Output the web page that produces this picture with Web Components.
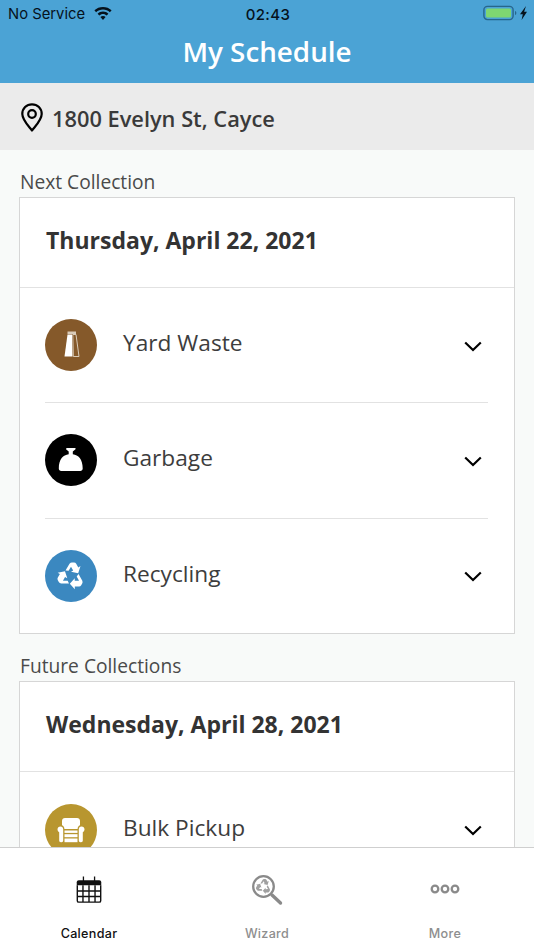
<!DOCTYPE html>
<html>
<head>
<meta charset="utf-8">
<title>My Schedule</title>
<style>
  html, body { margin:0; padding:0; height:100%; }
  body { font-family:"Open Sans","Liberation Sans",sans-serif; background:#f8faf9; }
</style>
</head>
<body>
<schedule-app>
  <status-bar slot="top"></status-bar>
  <nav-title slot="top">My Schedule</nav-title>
  <address-bar slot="top">1800 Evelyn St, Cayce</address-bar>

  <collection-group title="Next Collection" date="Thursday, April 22, 2021">
    <collection-item color="#85592a" name="Yard Waste" icon="yard"></collection-item>
    <collection-item color="#000000" name="Garbage" icon="garbage"></collection-item>
    <collection-item color="#3b88c0" name="Recycling" icon="recycle"></collection-item>
  </collection-group>
  <collection-group title="Future Collections" date="Wednesday, April 28, 2021">
    <collection-item color="#b8962f" name="Bulk Pickup" icon="chair"></collection-item>
  </collection-group>

  <tab-bar slot="bottom"></tab-bar>
</schedule-app>

<script>
const ARROW = "M20.500 20.500L24.500 13.800Q25.500 12.500 27 12.500H29Q30.500 12.500 31.200 13.800L33.300 17.400L35.500 16.100L33.200 23.200L26 21.700L28.200 20.400L26 16.700L23.600 20.800z";
const recycle = (fill) => `<g fill="${fill}"><path d="${ARROW}"/><path d="${ARROW}" transform="rotate(120 26 26)"/><path d="${ARROW}" transform="rotate(240 26 26)"/></g>`;

const ICONS = {
  yard: `<path d="M22.500 12.500H31V15H22.500z" fill="#d9cbb8"/><path d="M22.500 15.500H27L27.500 37.500H19.500z" fill="#fff"/><path d="M27.800 15.500H31L34 37.500H28.300z" fill="#85592a" stroke="#d9cbb8" stroke-width="1"/>`,
  garbage: `<path d="M21.500 14h9v1.200l-2.700 2.300v2.800c5.500.5 9.900 5 9.900 14.200 0 1.600-1 2.500-2.500 2.500H16.300c-1.500 0-2.500-.9-2.500-2.500 0-9.200 4.400-13.700 9.900-14.200v-2.800l-2.700-2.300z" fill="#fff"/>`,
  recycle: recycle("#fff"),
  chair: `<path d="M17 17c0-1.800 1.200-3 3-3h12c1.800 0 3 1.200 3 3v4.200c-1.500.6-2.400 2-2.400 3.800H19.400c0-1.800-.9-3.200-2.400-3.800z" fill="#fff"/>
    <path d="M15.500 22.500c-1.800 0-3 1.300-3 3 0 1.200.7 2.200 1.700 2.700v8.300c0 1 .7 1.700 1.700 1.700h.6c1 0 1.700-.7 1.700-1.700V25.500c0-1.700-1-3-2.700-3zM36.500 22.500c1.800 0 3 1.300 3 3 0 1.200-.7 2.200-1.700 2.700v8.300c0 1-.7 1.700-1.700 1.700h-.6c-1 0-1.700-.7-1.700-1.700V25.500c0-1.700 1-3 2.700-3z" fill="#fff"/>
    <rect x="19.500" y="26.500" width="13" height="2.400" fill="#fff"/><rect x="19.500" y="30.200" width="13" height="3" fill="#fff"/><rect x="19.500" y="34.500" width="13" height="3.700" fill="#fff"/>`
};

class ScheduleApp extends HTMLElement {
  constructor() {
    super();
    this.attachShadow({ mode: "open" }).innerHTML = `
      <style>
        :host{ display:flex; flex-direction:column; height:950px; width:534px; overflow:hidden; }
        .main{ flex:1; min-height:0; overflow:hidden; }
      </style>
      <slot name="top"></slot>
      <div class="main"><slot></slot></div>
      <slot name="bottom"></slot>`;
  }
}
customElements.define("schedule-app", ScheduleApp);

class StatusBar extends HTMLElement {
  constructor() {
    super();
    this.attachShadow({ mode: "open" }).innerHTML = `
      <style>
        :host{ display:block; background:#4ba3d5; height:28px; }
        .bar{ display:grid; grid-template-columns:1fr auto 1fr; align-items:center; height:28px; padding:0 6px 0 8px; font:400 14.800px Inter,"Liberation Sans",sans-serif; color:#06121c; }
        .left{ display:flex; align-items:center; gap:9px; }
        .time{ font-weight:500; font-size:15px; letter-spacing:.4px; }
        .right{ display:flex; justify-content:flex-end; align-items:center; }
        svg{ display:block; }
        .batt{ margin-top:-2px; }
        .wifi{ margin-top:-2px; }
      </style>
      <div class="bar">
        <div class="left"><span>No Service</span>
          <svg class="wifi" width="18" height="13" viewBox="0 0 18 13"><path d="M9 0C5.700 0 2.700 1.200.4 3.300l1.700 1.900C4 3.500 6.400 2.500 9 2.500s5 1 6.900 2.700l1.700-1.900C15.300 1.200 12.300 0 9 0zM9 4.600c-2.100 0-4 .8-5.400 2.100l1.700 1.900C6.300 7.700 7.600 7.100 9 7.100s2.700.6 3.700 1.500l1.700-1.900C13 5.400 11.100 4.600 9 4.600zM9 9.100c-1 0-1.900.4-2.600 1L9 13l2.600-2.900c-.7-.6-1.600-1-2.600-1z" fill="#06121c"/></svg>
        </div>
        <div class="time">02:43</div>
        <div class="right">
          <svg class="batt" width="45" height="16" viewBox="0 0 45 16">
            <rect x=".9" y="1.400" width="29.200" height="13.200" rx="3.500" fill="none" stroke="#27668c" stroke-width="1.400"/>
            <rect x="3" y="3.500" width="25" height="9" rx="1.500" fill="#7ed672"/>
            <path d="M32 6v4c.9-.3 1.300-1 1.300-2s-.4-1.700-1.300-2z" fill="#27668c"/>
            <path d="M43 1l-6 8.200h2.800L38.600 15l5.400-8.200h-2.900z" fill="#06121c"/>
          </svg>
        </div>
      </div>`;
  }
}
customElements.define("status-bar", StatusBar);

class NavTitle extends HTMLElement {
  constructor() {
    super();
    this.attachShadow({ mode: "open" }).innerHTML = `
      <style>
        :host{ display:block; background:#4ba3d5; height:55px; color:#fff; text-align:center; font:600 27.800px/47px "Open Sans",sans-serif; }
      </style>
      <slot></slot>`;
  }
}
customElements.define("nav-title", NavTitle);

class AddressBar extends HTMLElement {
  constructor() {
    super();
    this.attachShadow({ mode: "open" }).innerHTML = `
      <style>
        :host{ display:flex; align-items:center; gap:9px; height:67px; padding:0 20px 0 21px; background:#ebebeb; color:#3a3a3a; font:600 21.800px "Open Sans",sans-serif; }
        svg{ display:block; margin-top:1px; }
        span{ margin-top:4px; }
      </style>
      <svg width="22" height="29" viewBox="0 0 22 29"><path d="M11 1.300C5.500 1.300 1.300 5.500 1.300 11c0 5.800 5.300 11 9.700 16.500C15.400 22 20.700 16.800 20.700 11c0-5.500-4.200-9.700-9.700-9.700z" fill="none" stroke="#000" stroke-width="2.200" stroke-linejoin="round"/><circle cx="11" cy="11" r="3.800" fill="none" stroke="#000" stroke-width="2.200"/></svg>
      <span><slot></slot></span>`;
  }
}
customElements.define("address-bar", AddressBar);

class CollectionGroup extends HTMLElement {
  constructor() {
    super();
    this.attachShadow({ mode: "open" }).innerHTML = `
      <style>
        :host{ display:block; padding:20px 19px 0 19px; color:#3a3a3a; }
        .title{ font:400 19.200px/24px "Open Sans",sans-serif; color:#4a4a4a; padding-left:1px; height:27px; }
        .card{ background:#fff; border:1px solid #d6d6d6; }
        .date{ height:90px; box-sizing:border-box; border-bottom:1px solid #e2e2e2; padding-left:26px; font:700 23px/84px "Open Sans",sans-serif; color:#333; }
      </style>
      <div class="title"></div>
      <div class="card">
        <div class="date"></div>
        <slot></slot>
      </div>`;
    this.shadowRoot.querySelector(".title").textContent = this.getAttribute("title");
    this.shadowRoot.querySelector(".date").textContent = this.getAttribute("date");
  }
}
customElements.define("collection-group", CollectionGroup);

class CollectionItem extends HTMLElement {
  constructor() {
    super();
    const color = this.getAttribute("color");
    this.attachShadow({ mode: "open" }).innerHTML = `
      <style>
        :host{ display:block; padding:0 26px 0 25px; }
        .row{ display:flex; align-items:center; height:115.300px; box-sizing:border-box; border-bottom:1px solid #e2e2e2; }
        :host(:last-child) .row{ border-bottom:0; height:114.700px; }
        .dot{ width:52px; height:52px; border-radius:50%; flex:none; }
        .dot svg{ display:block; }
        .name{ flex:1; margin-left:26px; font:400 22.700px "Open Sans",sans-serif; color:#3d3d3d; margin-top:-5px; }
        .chev{ display:block; margin-right:6px; margin-top:2px; }
      </style>
      <div class="row">
        <div class="dot" style="background:${color}"><svg width="52" height="52" viewBox="0 0 52 52">${ICONS[this.getAttribute("icon")]}</svg></div>
        <div class="name">${this.getAttribute("name")}</div>
        <svg class="chev" width="18" height="11" viewBox="0 0 18 11"><path d="M1.200 1.500L9 9l7.800-7.500" fill="none" stroke="#000" stroke-width="2.200"/></svg>
      </div>`;
  }
}
customElements.define("collection-item", CollectionItem);

class TabBar extends HTMLElement {
  constructor() {
    super();
    this.attachShadow({ mode: "open" }).innerHTML = `
      <style>
        :host{ display:block; background:#fff; border-top:1px solid #cfcfcf; height:103px; box-sizing:border-box; }
        .tabs{ display:grid; grid-template-columns:1fr 1fr 1fr; height:100%; }
      </style>
      <div class="tabs">
        <tab-item label="Calendar" active>
          <svg width="26" height="28" viewBox="0 0 28 30">
            <path d="M3 4.500h22c1.300 0 2.200.9 2.200 2.200V10H.8V6.700C.8 5.400 1.700 4.500 3 4.500z" fill="#111"/>
            <path d="M8 .5v8M20 .5v8" stroke="#111" stroke-width="1.400"/>
            <path d="M1.400 10v16.500c0 1 .7 1.600 1.600 1.600h22c.9 0 1.600-.6 1.600-1.600V10" fill="none" stroke="#111" stroke-width="1.500"/>
            <path d="M1.400 16h25.200M1.400 22h25.200M7.500 10v18M14 10v18M20.500 10v18" stroke="#111" stroke-width="1.500"/>
          </svg>
        </tab-item>
        <tab-item label="Wizard">
          <svg width="32" height="32" viewBox="0 0 32 32">
            <circle cx="12.500" cy="12.500" r="10.300" fill="none" stroke="#8a8a8a" stroke-width="2.300"/>
            <path d="M21 21l8.500 8" stroke="#8a8a8a" stroke-width="3.400" stroke-linecap="round"/>
            <g transform="translate(12.500 12.500) scale(.56) translate(-26 -26)">${recycle("#a0a0a0")}</g>
          </svg>
        </tab-item>
        <tab-item label="More">
          <svg width="30" height="32" viewBox="0 0 30 32">
            <g fill="none" stroke="#8a8a8a" stroke-width="2.300"><circle cx="5" cy="15" r="3.300"/><circle cx="15" cy="15" r="3.300"/><circle cx="25" cy="15" r="3.300"/></g>
          </svg>
        </tab-item>
      </div>`;
  }
}
customElements.define("tab-bar", TabBar);

class TabItem extends HTMLElement {
  constructor() {
    super();
    const active = this.hasAttribute("active");
    this.attachShadow({ mode: "open" }).innerHTML = `
      <style>
        :host{ display:flex; flex-direction:column; align-items:center; padding-top:25px; font:500 12.600px Inter,"Liberation Sans",sans-serif; letter-spacing:.3px; color:${active ? "#111" : "#8e8e8e"}; }
        .icon{ height:34px; display:flex; align-items:center; justify-content:center; }
        .label{ margin-top:19px; line-height:16px; }
        ::slotted(svg){ display:block; }
      </style>
      <div class="icon"><slot></slot></div>
      <div class="label">${this.getAttribute("label")}</div>`;
  }
}
customElements.define("tab-item", TabItem);
</script>
</body>
</html>
